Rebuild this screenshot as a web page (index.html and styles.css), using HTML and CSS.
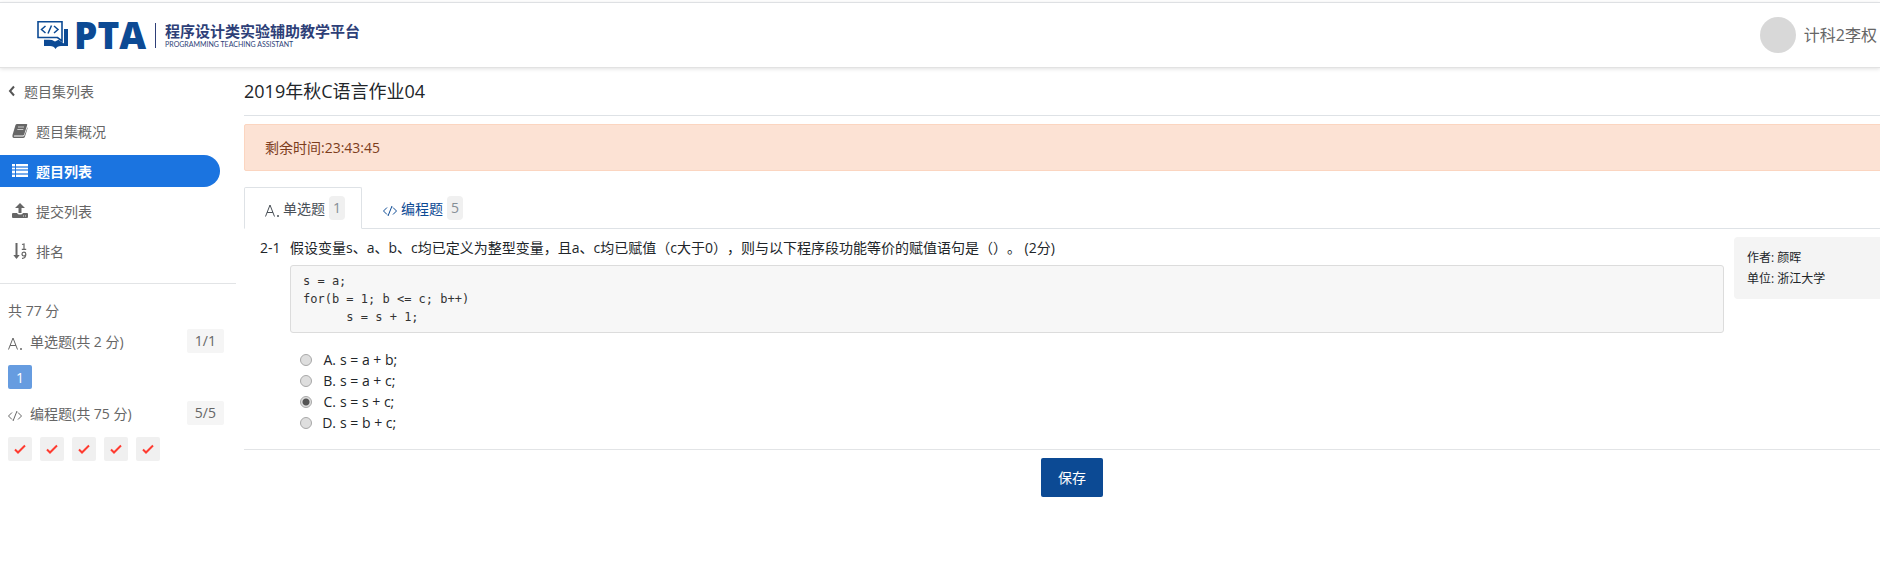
FILE: index.html
```html
<!DOCTYPE html>
<html lang="zh-CN">

<head>
    <meta charset="UTF-8" />
    <meta name="viewport" content="width=device-width, initial-scale=1" />
    <title>2019年秋C语言作业04</title>
    <link rel="stylesheet" href="styles.css">
</head>

<body>
    <header class="header">
        <a class="logo" href="#">
            <svg class="logo-icon" width="32" height="28" viewBox="0 0 32 28">
                <path d="M7 18.500h5q3 0 6 2 3-2 6-2h2V8h5v17h-7q-4 0-5.500 3Q17 25 13 25H7z" fill="#0c4a94" />
                <path d="M0 0h27v22.500l-6-4H0z" fill="#fff" />
                <path d="M1 .8h24V20l-4.500-3.500H1z" fill="#fff" stroke="#0c4a94" stroke-width="1.600" />
                <path d="M8.500 5L4.500 8.500l4 3.500M17 5l4 3.500-4 3.500M14.500 4.500l-3.500 8" fill="none" stroke="#0c4a94" stroke-width="1.500" />
            </svg>
            <span class="logo-name">PTA</span>
            <span class="logo-title">
                <span class="logo-cn">程序设计类实验辅助教学平台</span>
                <span class="logo-en">PROGRAMMING TEACHING ASSISTANT</span>
            </span>
        </a>
        <div class="user">
            <span class="avatar"></span>
            <span>计科2李权</span>
        </div>
    </header>

    <div class="layout">
        <aside class="sidebar">
            <nav class="menu">
                <a class="menu-back" href="#">
                    <svg width="8" height="12" viewBox="0 0 8 12"><path d="M6 1.500L2 6l4 4.500" fill="none" stroke="#555" stroke-width="2" /></svg>
                    <span>题目集列表</span>
                </a>
                <a class="menu-item" href="#">
                    <svg width="16" height="16" viewBox="0 0 16 16">
                        <path d="M5 1h9.500q1 0 .7 1l-3 9.500q-.3 1-1.300 1H2.500q-1 .2-.5 1H11q1 0 1.400-1L15.500 4v1.500L13 13.500Q12.500 15 11 15H2Q0 15 .5 12L3.500 2Q4 1 5 1z" fill="#666" />
                        <path d="M6 4h6M5.300 6.500h6" stroke="#ccc" />
                    </svg>
                    <span>题目集概况</span>
                </a>
                <a class="menu-item active" href="#">
                    <svg width="16" height="16" viewBox="0 0 16 16" fill="#fff">
                        <path d="M0 2h3v11H0zM4 2h12v11H4z" opacity=".4" />
                        <path d="M0 1h3v2H0zM0 5h3v1H0zM0 8h3v2H0zM0 12h3v2H0zM4 1h12v2H4zM4 5h12v1H4zM4 8h12v2H4zM4 12h12v2H4z" />
                    </svg>
                    <span>题目列表</span>
                </a>
                <a class="menu-item" href="#">
                    <svg width="16" height="16" viewBox="0 0 16 16" fill="#666">
                        <path d="M8 0l5 5H9.500v5h-3V5H3z" />
                        <path d="M1 10h4q.5 1.500 3 1.500t3-1.500h4q1 0 1 1v3q0 1-1 1H1q-1 0-1-1v-3q0-1 1-1z" />
                        <path d="M11 12.500h1v1h-1zM13 12.500h1v1h-1z" fill="#ddd" />
                    </svg>
                    <span>提交列表</span>
                </a>
                <a class="menu-item" href="#">
                    <svg width="16" height="16" viewBox="0 0 16 16">
                        <path d="M3.500 0h2v12h2.200l-3.200 4-3.200-4h2.200z" fill="#666" />
                        <path d="M10 1.500L12 1v5M9.800 6.300h4.400" fill="none" stroke="#666" stroke-width="1.200" />
                        <path d="M10 15.300q3.800.3 3.800-4.300a1.900 1.900 0 1 0-1.900 2q1.900 0 1.900-2" fill="none" stroke="#666" stroke-width="1.200" />
                    </svg>
                    <span>排名</span>
                </a>
            </nav>

            <section class="summary">
                <div class="total">共 77 分</div>
                <div class="group">
                    <svg class="type-icon" width="14" height="14" viewBox="0 0 14 14"><path d="M.5 13.500L5 2l4.500 11.500M2 9.500h6M12.500 12.500h1v1h-1z" fill="none" stroke="currentColor" /></svg>
                    <span>单选题(共 2 分)</span>
                    <span class="count">1/1</span>
                </div>
                <div class="boxes">
                    <a class="box current" href="#">1</a>
                </div>
                <div class="group">
                    <svg class="type-icon" width="14" height="14" viewBox="0 0 14 14"><path d="M4 4.500L.5 8 4 11.500M10 4.500L13.500 8 10 11.500M9 3L5 13" fill="none" stroke="currentColor" /></svg>
                    <span>编程题(共 75 分)</span>
                    <span class="count">5/5</span>
                </div>
                <div class="boxes">
                    <a class="box" href="#"><svg width="12" height="12" viewBox="0 0 12 12"><path d="M1 6.500L4 9.500 11 2.500" /></svg></a>
                    <a class="box" href="#"><svg width="12" height="12" viewBox="0 0 12 12"><path d="M1 6.500L4 9.500 11 2.500" /></svg></a>
                    <a class="box" href="#"><svg width="12" height="12" viewBox="0 0 12 12"><path d="M1 6.500L4 9.500 11 2.500" /></svg></a>
                    <a class="box" href="#"><svg width="12" height="12" viewBox="0 0 12 12"><path d="M1 6.500L4 9.500 11 2.500" /></svg></a>
                    <a class="box" href="#"><svg width="12" height="12" viewBox="0 0 12 12"><path d="M1 6.500L4 9.500 11 2.500" /></svg></a>
                </div>
            </section>
        </aside>

        <main class="content">
            <h1 class="title">2019年秋C语言作业04</h1>
            <div class="alert">剩余时间:23:43:45</div>

            <nav class="tabs">
                <a class="tab active" href="#">
                    <svg class="type-icon" width="14" height="14" viewBox="0 0 14 14"><path d="M.5 13.500L5 2l4.500 11.500M2 9.500h6M12.500 12.500h1v1h-1z" fill="none" stroke="currentColor" /></svg>
                    <span>单选题</span>
                    <span class="badge">1</span>
                </a>
                <a class="tab" href="#">
                    <svg class="type-icon" width="14" height="14" viewBox="0 0 14 14"><path d="M4 4.500L.5 8 4 11.500M10 4.500L13.500 8 10 11.500M9 3L5 13" fill="none" stroke="currentColor" /></svg>
                    <span>编程题</span>
                    <span class="badge">5</span>
                </a>
            </nav>

            <form>
                <div class="question">
                    <div class="number">2-1</div>
                    <div class="problem">
                        <p class="text">假设变量s、a、b、c均已定义为整型变量，且a、c均已赋值（c大于0），则与以下程序段功能等价的赋值语句是（）。 (2分)</p>
                        <pre class="code">s = a;
for(b = 1; b &lt;= c; b++)
      s = s + 1;</pre>
                        <div class="options">
                            <label class="option"><input type="radio" name="answer" value="A" /> <span class="letter">A.</span><span>s = a + b;</span></label>
                            <label class="option"><input type="radio" name="answer" value="B" /> <span class="letter">B.</span><span>s = a + c;</span></label>
                            <label class="option"><input type="radio" name="answer" value="C" checked /> <span class="letter">C.</span><span>s = s + c;</span></label>
                            <label class="option"><input type="radio" name="answer" value="D" /> <span class="letter">D.</span><span>s = b + c;</span></label>
                        </div>
                    </div>
                    <div class="author">
                        <div>作者: 颜晖</div>
                        <div>单位: 浙江大学</div>
                    </div>
                </div>
                <div class="actions">
                    <button class="save-btn" type="button">保存</button>
                </div>
            </form>
        </main>
    </div>
</body>

</html>
```
FILE: styles.css
```css
* {
    box-sizing: border-box;
}

body {
    margin: 0;
    font-family: "Open Sans", "Noto Sans CJK SC", sans-serif;
    font-size: 14px;
    line-height: 21px;
    color: #212529;
    background-color: #fff;
    overflow-x: hidden;
    text-spacing-trim: space-all;
}

a {
    color: inherit;
    text-decoration: none;
}

svg {
    display: block;
    flex: none;
}

.header {
    display: flex;
    align-items: center;
    justify-content: space-between;
    height: 66px;
    margin-top: 2px;
    padding: 0 3px 0 37px;
    border-top: 1px solid #dee0e3;
    border-bottom: 1px solid #e2e2e2;
    box-shadow: 0 1px 4px rgba(0, 0, 0, 0.12);
}

.logo {
    display: flex;
    align-items: center;
    color: #0c4a94;
}

.logo-name {
    margin-left: 5px;
    font-size: 37px;
    font-weight: 800;
    line-height: 36px;
}

.logo-title {
    display: flex;
    flex-direction: column;
    margin-left: 9px;
    padding-left: 9px;
    border-left: 1px solid #2e3f78;
    color: #2e3f78;
}

.logo-cn {
    font-size: 15px;
    font-weight: bold;
    line-height: 17px;
}

.logo-en {
    font-family: Lato, sans-serif;
    font-size: 7px;
    line-height: 8px;
}

.user {
    display: flex;
    align-items: center;
    gap: 8px;
    font-size: 16px;
    color: #666;
}

.avatar {
    width: 36px;
    height: 36px;
    border-radius: 50%;
    background-color: #d8d8d8;
}

/* content is a little wider than the window */
.layout {
    display: flex;
    width: calc(100% + 20px);
}

.sidebar {
    flex: none;
    width: 236px;
    color: #666;
}

.menu {
    display: flex;
    flex-direction: column;
    gap: 8px;
    padding: 7px 16px 16px 0;
    border-bottom: 1px solid #e2e4e6;
}

.menu-back,
.menu-item {
    display: flex;
    align-items: center;
    gap: 8px;
    height: 32px;
    padding-left: 12px;
}

.menu-back {
    padding-left: 8px;
}

.menu-item.active {
    border-radius: 0 16px 16px 0;
    background-color: #1b74e0;
    color: #fff;
    font-weight: bold;
}

.summary {
    display: flex;
    flex-direction: column;
    padding: 16px 12px 0 8px;
}

.total {
    margin-bottom: 8px;
}

.group {
    display: flex;
    align-items: center;
    gap: 8px;
    height: 24px;
}

.type-icon {
    position: relative;
    top: 2px;
}

.count {
    margin-left: auto;
    padding: 0 8px;
    border-radius: 2px;
    background-color: #f5f5f5;
    line-height: 24px;
}

.boxes {
    display: flex;
    gap: 8px;
    margin: 12px 0;
}

.box {
    display: flex;
    align-items: center;
    justify-content: center;
    width: 24px;
    height: 24px;
    border-radius: 2px;
    background-color: #f0f0f0;
}

.box path {
    fill: none;
    stroke: #ff3b30;
    stroke-width: 2;
}

.box.current {
    background-color: #669ce0;
    color: #fff;
}

.content {
    flex: 1;
    min-width: 0;
    margin-left: 8px;
}

.title {
    margin: 0 0 8px;
    padding: 10px 0 11px;
    border-bottom: 1px solid #dee2e6;
    font-size: 18px;
    font-weight: normal;
    line-height: 26px;
}

.alert {
    padding: 12px 20px;
    border: 1px solid #fbd5c0;
    border-radius: 2px;
    background-color: #fce2d4;
    color: #7d3d1c;
}

.tabs {
    display: flex;
    margin-top: 16px;
    border-bottom: 1px solid #dee2e6;
}

.tab {
    display: flex;
    align-items: center;
    gap: 4px;
    margin-bottom: -1px;
    padding: 8px 16px 8px 20px;
    border: 1px solid transparent;
    color: #0c4a94;
}

.tab.active {
    border-color: #dee2e6 #dee2e6 #fff;
    border-radius: 2px 2px 0 0;
    color: #495057;
}

.badge {
    padding: 0 4px;
    border-radius: 4px;
    background-color: #f0f0f0;
    color: #868e96;
    line-height: 24px;
}

.question {
    display: flex;
    align-items: flex-start;
    padding: 8px 8px 16px 16px;
    border-bottom: 1px solid #e2e4e6;
}

.number {
    width: 30px;
}

.problem {
    flex: 1;
}

.text {
    margin: 0 0 7px;
}

.code {
    margin: 0 0 16px;
    padding: 6px 12px;
    border: 1px solid #dcdcdc;
    border-radius: 3px;
    background-color: #f7f7f7;
    color: #333;
    font-family: "DejaVu Sans Mono", monospace;
    font-size: 12px;
    line-height: 18px;
}

.option {
    display: flex;
    align-items: center;
    padding-left: 10px;
}

.option input {
    appearance: none;
    width: 12px;
    height: 12px;
    margin: 0;
    border: 1px solid #a8a8a8;
    border-radius: 50%;
    background-color: #dedede;
}

.option input:checked {
    background-image: radial-gradient(#555 3px, transparent 4px);
}

.letter {
    width: 28px;
    padding-right: 4px;
    text-align: right;
}

.author {
    width: 158px;
    margin-left: 10px;
    padding: 10px 13px;
    border-radius: 4px;
    background-color: #f4f4f4;
    font-size: 12px;
}

.actions {
    display: flex;
    justify-content: center;
    padding-top: 8px;
}

.save-btn {
    padding: 9px 17px;
    border: none;
    border-radius: 2px;
    background-color: #0c4a94;
    color: #fff;
    font: inherit;
    cursor: pointer;
}
```
